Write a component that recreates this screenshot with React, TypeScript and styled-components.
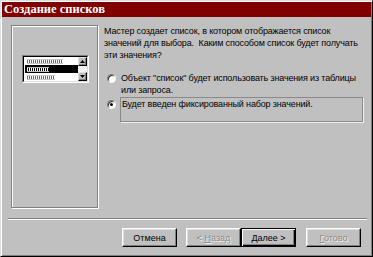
import React from 'react';
import styled, { createGlobalStyle } from 'styled-components';

const Global = createGlobalStyle`
  html, body { margin: 0; padding: 0; background: #c0c0c0; }
  body { width: 373px; height: 257px; overflow: hidden; }
`;

const Window = styled.div`
  box-sizing: border-box;
  width: 373px;
  height: 257px;
  background: #c0c0c0;
  border: 1px solid;
  border-color: #dfdfdf #000 #000 #dfdfdf;
  box-shadow: inset 1px 1px #fff, inset -1px -1px #808080;
  padding: 1px;
  display: flex;
  flex-direction: column;
  font-family: "Liberation Sans", Arial, sans-serif;
  color: #000;
`;

const TitleBar = styled.div`
  height: 15px;
  background: #800000;
  color: #fff;
  font: bold 12.5px/15px "Liberation Serif", "Times New Roman", serif;
  padding-left: 2px;
  white-space: nowrap;
`;

const Body = styled.div`
  box-sizing: border-box;
  height: 201px;
  display: flex;
  padding: 8px 0 10px 9px;
`;

const LeftPanel = styled.div`
  box-sizing: border-box;
  width: 87px;
  height: 183px;
  border: 1px solid #808080;
  box-shadow: inset 1px 1px #fff, 1px 1px #fff;
  padding: 29px 0 0 10px;
`;

const ListOuter = styled.div`
  box-sizing: border-box;
  width: 67px;
  height: 28px;
  border: 1px solid;
  border-color: #808080 #fff #fff #808080;
`;

const ListInner = styled.div`
  box-sizing: border-box;
  height: 100%;
  border: 1px solid;
  border-color: #000 #dfdfdf #dfdfdf #000;
  background: #fff;
  display: flex;
`;

const Rows = styled.div`
  flex: 1;
  display: flex;
  flex-direction: column;
  padding-left: 1px;
`;

const Row = styled.div<{ $selected?: boolean }>`
  height: 8px;
  display: flex;
  align-items: center;
  padding-left: 2px;
  background: ${(p) => (p.$selected ? '#000' : 'transparent')};
`;

const Placeholder = styled.span<{ $w: number; $light?: boolean }>`
  display: block;
  width: ${(p) => p.$w}px;
  height: 3px;
  background:
    repeating-linear-gradient(90deg, ${(p) => (p.$light ? '#fff' : '#6a6a6a')} 0 1px, transparent 1px 2px);
  border-top: 1px solid ${(p) => (p.$light ? '#bbb' : '#c8c8c8')};
  border-bottom: 1px solid ${(p) => (p.$light ? '#bbb' : '#c8c8c8')};
`;

const ScrollBar = styled.div`
  width: 9px;
  display: flex;
  flex-direction: column;
  background: repeating-conic-gradient(#e6e6e6 0 25%, #fff 0 50%) 0 0 / 2px 2px;
`;

const ScrollButton = styled.div`
  box-sizing: border-box;
  width: 9px;
  height: 9px;
  background: #c0c0c0;
  border: 1px solid;
  border-color: #dfdfdf #000 #000 #dfdfdf;
  box-shadow: inset -1px -1px #808080;
  display: flex;
  align-items: center;
  justify-content: center;
`;

const ScrollTrack = styled.div`
  flex: 1;
`;

const RightPanel = styled.div`
  flex: 1;
  padding: 0 8px 0 6px;
  font-size: 9px;
  line-height: 12px;
  letter-spacing: -0.15px;
  white-space: nowrap;
`;

const Paragraph = styled.p`
  margin: 0;
`;

const Option = styled.div<{ $gap: number }>`
  display: flex;
  align-items: flex-start;
  margin-top: ${(p) => p.$gap}px;
`;

const Radio = styled.span<{ $checked?: boolean; $top: number }>`
  box-sizing: border-box;
  flex: none;
  width: 9px;
  height: 9px;
  margin: ${(p) => p.$top}px 4px 0 3px;
  border-radius: 50%;
  background: #fff;
  border: 1px solid;
  border-color: #808080 #f4f4f4 #f4f4f4 #808080;
  box-shadow: inset 1px 1px #303030;
  display: flex;
  align-items: center;
  justify-content: center;
  &::after {
    content: '';
    display: ${(p) => (p.$checked ? 'block' : 'none')};
    width: 3px;
    height: 3px;
    border-radius: 50%;
    background: #000;
  }
`;

const OptionText = styled.span`
  padding-left: 1px;
`;

const OptionBox = styled.div`
  box-sizing: border-box;
  flex: 1;
  height: 25px;
  border: 1px solid #8a8a8a;
  box-shadow: 1px 1px #f0f0f0;
  padding: 0 0 0 1px;
`;

const Separator = styled.div`
  margin: 0 4px 0 6px;
  border-top: 1px solid #808080;
  border-bottom: 1px solid #fff;
`;

const ButtonRow = styled.div`
  display: flex;
  justify-content: flex-end;
  padding: 8px 10px 0 0;
`;

const Button = styled.button<{ $default?: boolean; $gapRight?: number }>`
  box-sizing: border-box;
  width: 55px;
  height: 19px;
  margin: 0 ${(p) => p.$gapRight ?? 0}px 0 0;
  padding: 0;
  background: #c0c0c0;
  font: 9px "Liberation Sans", Arial, sans-serif;
  color: #000;
  border: 1px solid;
  border-color: ${(p) => (p.$default ? '#000' : '#fff #000 #000 #fff')};
  box-shadow: ${(p) =>
    p.$default
      ? 'inset 1px 1px #fff, inset -1px -1px #000, inset -2px -2px #808080'
      : 'inset -1px -1px #808080, inset 1px 1px #dfdfdf'};
  &:disabled {
    color: #8a8a8a;
    text-shadow: 1px 1px #f2f2f2;
  }
  u {
    text-decoration-thickness: 1px;
  }
`;

const Arrow = ({ down }: { down?: boolean }) => (
  <svg width="5" height="3" viewBox="0 0 5 3">
    <polygon points={down ? '0,0 5,0 2.5,3' : '0,3 5,3 2.5,0'} fill="#000" />
  </svg>
);

export default function App() {
  return (
    <>
      <Global />
      <Window>
        <TitleBar>Создание списков</TitleBar>
        <Body>
          <LeftPanel>
            <ListOuter>
              <ListInner>
                <Rows>
                  <Row>
                    <Placeholder $w={36} />
                  </Row>
                  <Row $selected>
                    <Placeholder $w={22} $light />
                  </Row>
                  <Row>
                    <Placeholder $w={28} />
                  </Row>
                </Rows>
                <ScrollBar>
                  <ScrollButton>
                    <Arrow />
                  </ScrollButton>
                  <ScrollTrack />
                  <ScrollButton>
                    <Arrow down />
                  </ScrollButton>
                </ScrollBar>
              </ListInner>
            </ListOuter>
          </LeftPanel>
          <RightPanel>
            <Paragraph>
              Мастер создает список, в котором отображается список
              <br />
              значений для выбора.&nbsp; Каким способом список будет получать
              <br />
              эти значения?
            </Paragraph>
            <Option $gap={11}>
              <Radio $top={2} />
              <OptionText>
                Объект "список" будет использовать значения из таблицы
                <br />
                или запроса.
              </OptionText>
            </Option>
            <Option $gap={1}>
              <Radio $checked $top={3} />
              <OptionBox>Будет введен фиксированный набор значений.</OptionBox>
            </Option>
          </RightPanel>
        </Body>
        <Separator />
        <ButtonRow>
          <Button $gapRight={9}>Отмена</Button>
          <Button disabled>
            &lt; <u>Н</u>азад
          </Button>
          <Button $default $gapRight={10}>
            <u>Д</u>алее &gt;
          </Button>
          <Button disabled>
            <u>Г</u>отово
          </Button>
        </ButtonRow>
      </Window>
    </>
  );
}
